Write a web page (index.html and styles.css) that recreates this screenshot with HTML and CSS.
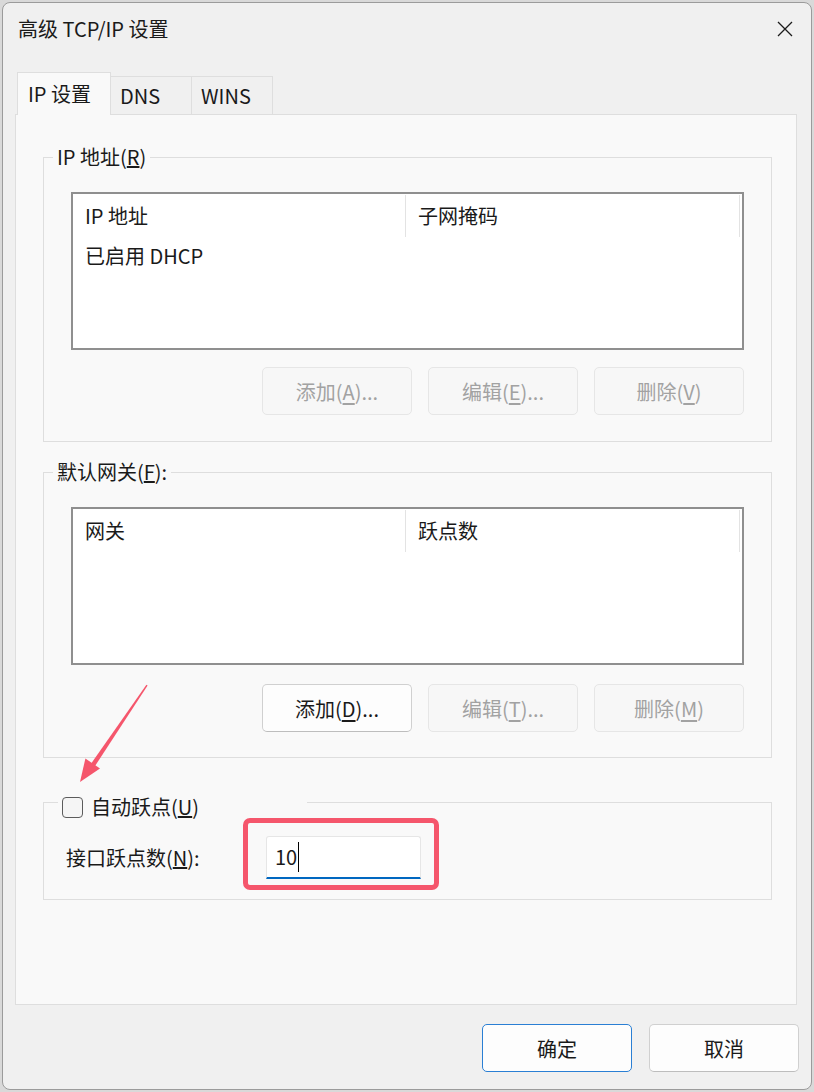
FILE: index.html
```html
<!DOCTYPE html>
<html>
<head>
<meta charset="UTF-8">
<title>高级 TCP/IP 设置</title>
<link rel="stylesheet" href="styles.css">
</head>
<body>
<div class="dialog">
	<div class="titlebar">
		<span class="title">高级 TCP/IP 设置</span>
		<svg class="close" width="16" height="16" viewBox="0 0 16 16"><path d="M1 1 L15 15 M15 1 L1 15" stroke="#1b1b1b" stroke-width="1.3" fill="none"/></svg>
	</div>

	<div class="tabs">
		<div class="tab active">IP 设置</div>
		<div class="tab">DNS</div>
		<div class="tab">WINS</div>
	</div>

	<div class="panel">
		<fieldset class="group">
			<legend>IP 地址(<u>R</u>)</legend>
			<div class="listbox">
				<div class="list-head">
					<div class="col c1">IP 地址</div>
					<div class="col c2">子网掩码</div>
				</div>
				<div class="list-row">已启用 DHCP</div>
			</div>
			<div class="btnrow">
				<button class="btn" disabled>添加(<u>A</u>)...</button>
				<button class="btn" disabled>编辑(<u>E</u>)...</button>
				<button class="btn" disabled>删除(<u>V</u>)</button>
			</div>
		</fieldset>

		<fieldset class="group second">
			<legend>默认网关(<u>F</u>):</legend>
			<div class="listbox">
				<div class="list-head">
					<div class="col c1">网关</div>
					<div class="col c2">跃点数</div>
				</div>
			</div>
			<div class="btnrow">
				<button class="btn">添加(<u>D</u>)...</button>
				<button class="btn" disabled>编辑(<u>T</u>)...</button>
				<button class="btn" disabled>删除(<u>M</u>)</button>
			</div>
		</fieldset>

		<fieldset class="group third">
			<legend class="check-legend"><span class="checkbox"></span>自动跃点(<u>U</u>)</legend>
			<div class="metric">
				<span class="metric-label">接口跃点数(<u>N</u>):</span>
				<div class="textbox"><span class="value">10</span></div>
			</div>
		</fieldset>
	</div>

	<div class="footer">
		<button class="btn default">确定</button>
		<button class="btn">取消</button>
	</div>

	<!-- annotations -->
	<div class="mark-box"></div>
	<svg class="mark-arrow" width="90" height="110" viewBox="0 0 90 110">
		<polygon points="77.6,5.6 76.4,4.8 20.4,84.6 24.2,87.3" fill="#f5566c"/>
		<polygon points="10,102 15.4,78.4 30,88.6" fill="#f5566c"/>
	</svg>
</div>
</body>
</html>
```
FILE: styles.css
```css
body{
	margin: 0;
	background: #d9d9d9;
	font-family: "Noto Sans CJK SC", "Liberation Sans", sans-serif;
	color: #1a1a1a;
}

.dialog{
	position: relative;
	margin: 2px;
	width: 810px;
	height: 1088px;
	box-sizing: border-box;
	border: 1px solid #9b9b9b;
	border-radius: 8px;
	background: #f0f0f0;
	display: flex;
	flex-direction: column;
}

.titlebar{
	height: 52px;
	display: flex;
	align-items: center;
	justify-content: space-between;
	padding: 0 18px 0 15px;
	flex: none;
}
.title{
	font-size: 20px;
	line-height: 26px;
}

.tabs{
	display: flex;
	align-items: flex-end;
	margin: 17px 0 0 14px;
	position: relative;
	z-index: 1;
	flex: none;
}
.tab{
	height: 37px;
	padding: 0 9px;
	min-width: 62px;
	border: 1px solid #dedede;
	border-bottom: none;
	background: #f0f0f0;
	font-size: 20px;
	line-height: 37px;
	margin-left: -1px;
}
.tab.active{
	height: 42px;
	line-height: 42px;
	padding: 0 10px;
	min-width: 72px;
	background: #f9f9f9;
	margin-left: 0;
	margin-bottom: -1px;
	position: relative;
	z-index: 2;
}

.panel{
	flex: 1;
	margin: 0 14px 0 12px;
	border: 1px solid #dedede;
	background: #f9f9f9;
	padding: 29px 24px 0 27px;
}

.group{
	margin: 0;
	border: 1px solid #dedede;
	padding: 22px 27px 26px 27px;
	min-width: 0;
}
.group legend{
	margin-left: -18px;
	padding: 0 4px;
	font-size: 20px;
	line-height: 26px;
}
.group.second{
	margin-top: 17px;
	padding-bottom: 25px;
}
.group.third{
	margin-top: 26px;
	padding: 16px 27px 20px 22px;
}

.check-legend{
	display: flex;
	align-items: center;
	width: 249px;
	box-sizing: border-box;
	padding-top: 10px !important;
	margin-left: -8px !important;
}
.checkbox{
	width: 19px;
	height: 19px;
	border: 1.5px solid #5c5c5c;
	border-radius: 4px;
	background: #f5f5f5;
	margin-right: 8px;
	margin-left: 0;
}

.listbox{
	height: 154px;
	border: 2px solid #8f8f8f;
	background: #fff;
}
.list-head{
	display: flex;
	height: 42px;
	margin-top: 1px;
}
.col{
	font-size: 20px;
	line-height: 42px;
	padding-left: 12px;
	border-right: 1px solid #e3e3e3;
}
.col.c1{
	width: 320px;
}
.col.c2{
	width: 321px;
}
.list-row{
	font-size: 20px;
	line-height: 38px;
	padding-left: 12px;
}

.btnrow{
	display: flex;
	justify-content: flex-end;
	gap: 16px;
	margin-top: 17px;
}
.group.second .btnrow{
	margin-top: 19px;
}

.btn{
	width: 150px;
	height: 48px;
	border: 1px solid #d0d0d0;
	border-bottom-color: #bdbdbd;
	border-radius: 5px;
	background: #fdfdfd;
	font-family: "Noto Sans CJK SC", "Liberation Sans", sans-serif;
	font-size: 20px;
	color: #1a1a1a;
	padding: 0;
}
.btn[disabled]{
	border-color: #e6e6e6;
	background: #f7f7f7;
	color: #a2a2a2;
}
.btn u{
	text-underline-offset: 3px;
}

.metric{
	display: flex;
	align-items: center;
}
.metric-label{
	width: 200px;
	font-size: 20px;
	line-height: 26px;
}
.textbox{
	width: 145px;
	height: 40px;
	border: 1px solid #e6e6e6;
	border-bottom: 2px solid #0067c0;
	border-radius: 3px 3px 0 0;
	background: #fff;
	display: flex;
	align-items: center;
	padding-left: 8px;
}
.value{
	font-size: 20px;
	line-height: 30px;
	padding-right: 1px;
	border-right: 1.5px solid #000;
}

.footer{
	flex: none;
	display: flex;
	justify-content: flex-end;
	gap: 17px;
	padding: 19px 12px 17px 0;
}
.btn.default{
	border: 1.5px solid #2a7fd4;
}

.mark-box{
	position: absolute;
	left: 240px;
	top: 815px;
	width: 186px;
	height: 62px;
	border: 5px solid #f5566c;
	border-radius: 7px;
}
.mark-arrow{
	position: absolute;
	left: 67px;
	top: 677px;
}
```
